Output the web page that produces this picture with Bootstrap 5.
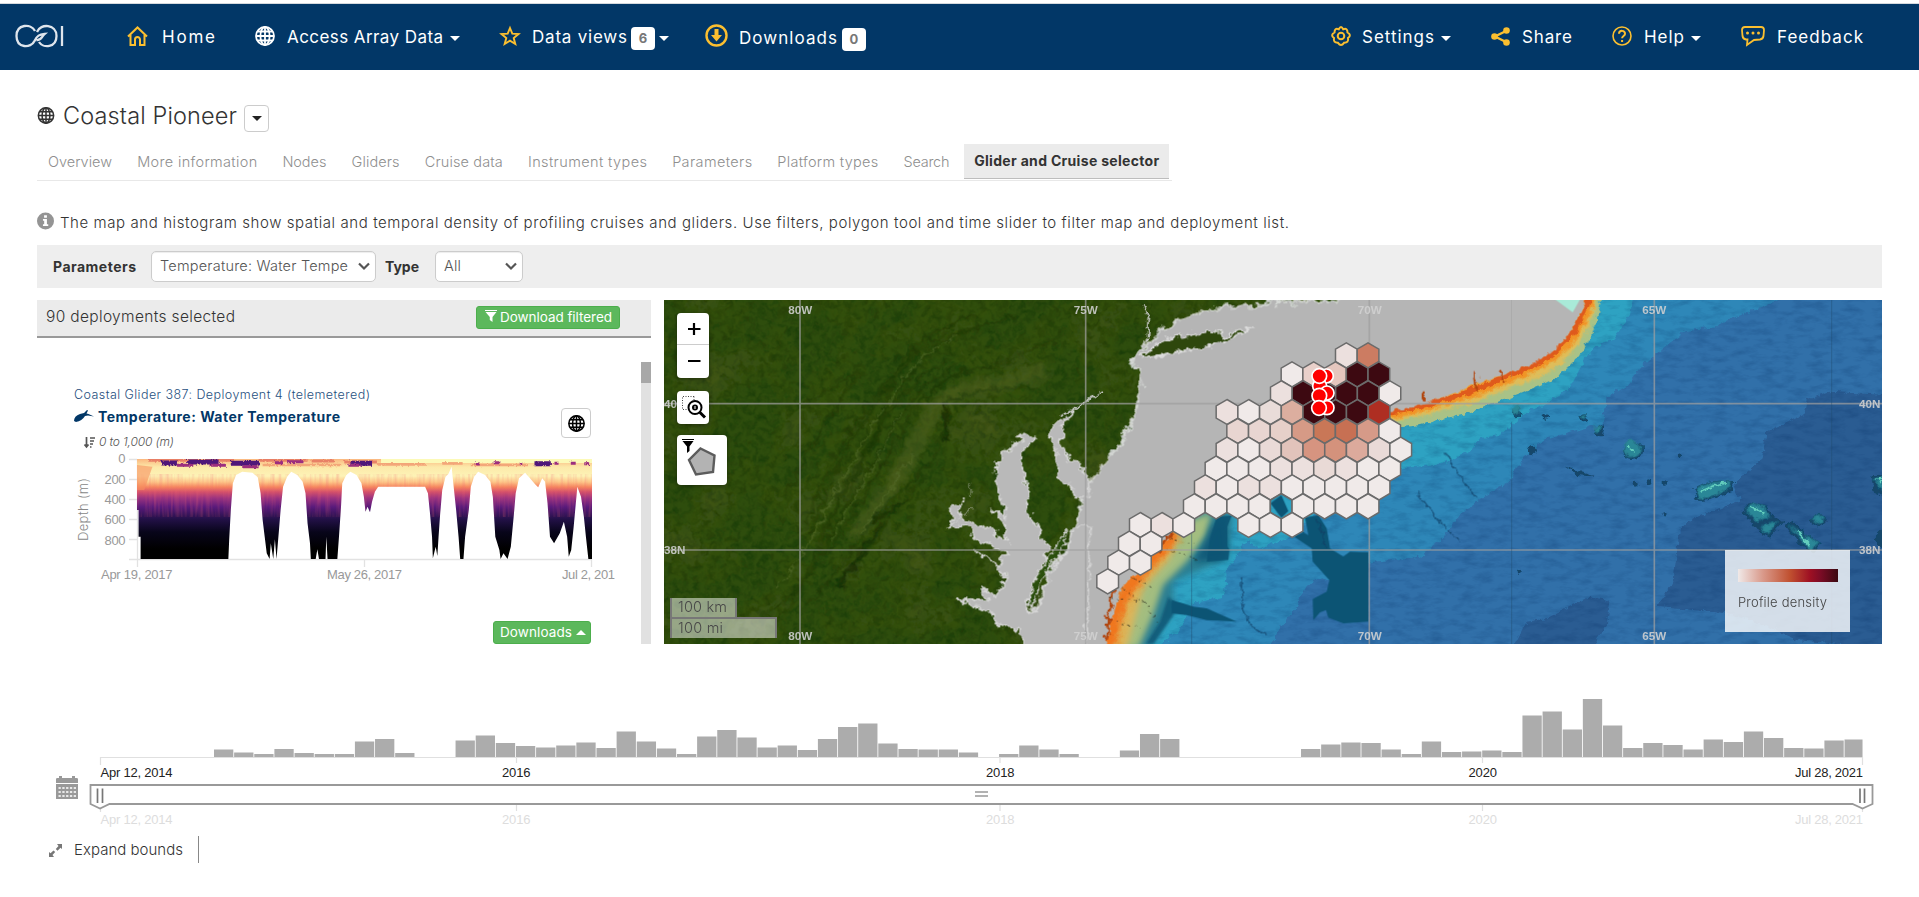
<!DOCTYPE html>
<html lang="en">
<head>
<meta charset="utf-8">
<title>Coastal Pioneer</title>
<link href="https://cdn.jsdelivr.net/npm/bootstrap@5.3.0/dist/css/bootstrap.min.css" rel="stylesheet">
<style>
body{font-family:Inter,"Open Sans",sans-serif;font-size:14.500px;color:#333;background:#fff;overflow:hidden}
.t{display:block;white-space:nowrap;flex:none}
.ico{flex:none;display:block;overflow:visible}
.topbar{margin-top:3px;height:67px;border-top:1px solid #d5d9de;background:#023767;color:#fff;font-size:17px;padding:2px 56px 0 15px}
.gold{color:#fbbf30}
.slot{width:32px;flex:none;margin-top:-4px}
.slot-home{width:35px}.slot-dl{width:34px}.slot-s{width:31px}.slot-fb{width:36px}
.menu{gap:40px}
.menu-main{margin-left:64px}
.caret{width:0;height:0;border:5px solid transparent;border-top-color:currentColor;border-bottom:0;flex:none;margin-left:7px}
.caret-up{border:5px solid transparent;border-bottom-color:#fff;border-top:0;width:0;height:0;margin-left:4px}
.cnt{background:#fff;color:#777;font-weight:700;font-size:13px;width:24px;height:23px;line-height:23px;border-radius:4px;text-align:center;margin-left:4px}
.main{padding:35px 37px 0}
.title{font-size:23.500px;font-weight:300;line-height:22px;margin-left:8px}
.btn-o{border:1px solid #ccc;border-radius:4px;background:#fff;display:flex;align-items:center;justify-content:center;flex:none}
.tabs{margin-top:12px;width:1135px;height:37px;border-bottom:1px solid #e8e8e8;color:#8f8f8f;font-weight:300;line-height:36px;padding-left:11px;gap:25.200px}
.tabs .on{background:#ebebeb;color:#333;font-size:14px;font-weight:700;height:35px;line-height:33px;border-bottom:1px solid #bdbdbd;padding:0 10px;margin-left:-10.500px}
.info{margin-top:31px;height:21px;line-height:21px;gap:6px;font-size:15px;font-weight:300}
.filters{margin-top:12px;height:43px;background:#eee;padding:0 0 1px 16px}
.filters b{font-size:14px}
.sel{height:31px;border:1px solid #ccc;border-radius:5px;background:#fff;color:#555;font-weight:300;padding:0 5px 0 8px;box-shadow:inset 0 1px 1px rgba(0,0,0,.075)}
.panels{margin-top:12px;gap:13px;height:344px}
.left{width:614px}
.lhead{height:38px;background:#ebebeb;border-bottom:2px solid #999;padding:0 31px 2px 9px}
.lhead>.t{font-weight:300;font-size:15.500px}
.grn{background:#5cb85c;border:1px solid #4cae4c;border-radius:3px;color:#fff;font-size:13.500px;height:23px;display:flex;align-items:center}
.list{height:282px;margin-top:24px}
.track{width:10px;background:#e1e1e1}
.thumb{height:21px;background:#a8a8a8}
.navy{color:#023767}
.dep{color:#1f4f7e;font-size:12.500px;font-weight:300;line-height:19px}
.depth{padding:4px 0 0 10px;color:#555;font-size:12px;font-weight:300;line-height:20px}
.map{width:1218px;height:344px}
.map>svg{display:block}
.over{position:absolute;background:#fff;border-radius:4px;box-shadow:0 1px 4px rgba(0,0,0,.4)}
.over svg{display:block}
.o1{left:13px;top:13px;width:32px;height:65px}
.o2{left:13px;top:91px;width:32px;height:33px}
.o3{left:13px;top:135px;width:50px;height:50px}
.scale{position:absolute;left:6px;top:298px;color:#484848;font-size:14.500px;font-weight:300;line-height:17px}
.scale>div{background:rgba(255,255,255,.5);border:2px solid #777;border-top:0;padding-left:6px;height:21px}
.scale .km{width:67px;border-bottom:0;height:19px}
.scale .mi{width:107px;border-top:2px solid #777;border-bottom:0}
.legend{position:absolute;left:1061px;top:250px;width:125px;height:82px;background:rgba(255,255,255,.8);padding:19px 13px;color:#444;font-size:13px;font-weight:300}
.ramp{width:100px;height:13px;background:linear-gradient(90deg,#f0e9e8,#d9998a 25%,#c05030 52%,#9e1023 72%,#7d0c26 82%,#3b0911)}
.arial{font-family:"Liberation Sans",Arial,sans-serif}
.time{margin-top:46px;display:block}
.expand{margin-top:6px;height:27px;padding-left:12px;width:162px;border-right:1px solid #888;font-size:15px;font-weight:300}
</style>
</head>
<body>
<svg width="0" height="0" class="position-absolute">
<defs>
<symbol id="globe" viewBox="0 0 20 20"><g fill="none" stroke="currentColor" stroke-width="1.800"><circle cx="10" cy="10" r="9"/><ellipse cx="10" cy="10" rx="4.600" ry="9"/><path d="M10 1v18M1 10h18M2.600 5.500h14.800M2.600 14.500h14.800"/></g></symbol>
<symbol id="funnel" viewBox="0 0 12 12"><path fill="currentColor" d="M0 0h12v1H0zM.5 2h11L7.500 7v5L4.800 10V7z"/></symbol>
</defs>
</svg>

<nav class="topbar d-flex align-items-center">
  <svg class="ico" width="48" height="22" viewBox="0 0 48 22" fill="none" stroke="#dfe5ec" stroke-width="2.300" style="margin-top:-4px"><path d="M20 6C16-2 1.500-1 1.500 11c0 12.500 14.500 12.500 18 5 2.500-5.500 5-6.500 10-7-3 2.500-3 6.500-8 6M22 7c3.500-9 19.500-8 19.500 4 0 12-13.500 12.500-17.500 6M47 1v20"/></svg>
  <div class="menu menu-main d-flex align-items-center">
    <div class="d-flex align-items-center"><div class="slot slot-home gold"><svg class="ico" width="21" height="20" viewBox="0 0 21 20" fill="none" stroke="currentColor" stroke-width="2"><path d="M1 10.500L10.500 1.500 20 10.500M3.500 9v10H8v-5.500a2.500 2.500 0 0 1 5 0V19h4.500V9"/></svg></div><span class="t" data-w="53">Home</span></div>
    <div class="d-flex align-items-center"><div class="slot"><svg class="ico" width="20" height="20"><use href="#globe"/></svg></div><span class="t" data-w="156">Access Array Data</span><i class="caret"></i></div>
    <div class="d-flex align-items-center"><div class="slot gold"><svg class="ico" width="20" height="20" viewBox="0 0 20 20" fill="none" stroke="currentColor" stroke-width="1.900"><path d="M10 2l2.300 5.700 6.200.3-4.800 4 1.600 6-5.300-3.400L4.700 18l1.600-6-4.800-4 6.200-.3z"/></svg></div><span class="t" data-w="95">Data views</span><span class="cnt">6</span><i class="caret ms-1"></i></div>
    <div class="d-flex align-items-center" style="margin-left:-4px"><div class="slot slot-dl gold"><svg class="ico" width="23" height="23" viewBox="0 0 23 23" style="margin-top:-2px"><circle cx="11.500" cy="11.500" r="10" fill="none" stroke="currentColor" stroke-width="2.400"/><path fill="currentColor" d="M9.500 5h4v6h3.500l-5.500 6.500L6 11h3.500z"/></svg></div><span class="t" style="margin-top:2px" data-w="98">Downloads</span><span class="cnt" style="margin-top:3px;margin-left:5px">0</span></div>
  </div>
  <div class="menu d-flex align-items-center ms-auto">
    <div class="d-flex align-items-center"><div class="slot slot-s gold"><svg class="ico" width="20" height="20" viewBox="0 0 20 20" fill="none" stroke="currentColor" stroke-width="2"><circle cx="10" cy="10" r="3.300"/><path d="M7.800 3.200Q10-1 12.200 3.200 16.500 1.500 16.500 6.500 21 9 17 12 18 17 13 16.800 10 21 7 16.800 2 17 3 12-1 9 3.500 6.500 3.500 1.500 7.800 3.200z"/></svg></div><span class="t" data-w="72">Settings</span><i class="caret"></i></div>
    <div class="d-flex align-items-center"><div class="slot slot-s gold"><svg class="ico" width="19" height="19" viewBox="0 0 19 19"><path d="M15 4L4 9.500 15 15" fill="none" stroke="currentColor" stroke-width="2.400"/><g fill="currentColor"><circle cx="15.500" cy="3.500" r="3.300"/><circle cx="3.500" cy="9.500" r="3.300"/><circle cx="15.500" cy="15.500" r="3.300"/></g></svg></div><span class="t" data-w="50">Share</span></div>
    <div class="d-flex align-items-center"><div class="slot gold"><svg class="ico" width="20" height="20" viewBox="0 0 20 20" fill="none" stroke="currentColor"><circle cx="10" cy="10" r="9" stroke-width="1.600"/><path d="M7 7.700c.3-4 6.300-3.600 6 .2-.2 2.200-2.900 2-2.900 4.300M10.100 14v2" stroke-width="2"/></svg></div><span class="t" data-w="40">Help</span><i class="caret"></i></div>
    <div class="d-flex align-items-center"><div class="slot slot-fb gold"><svg class="ico" width="24" height="20" viewBox="0 0 24 20"><path d="M4 1h16q3 0 3 3l-.5 6q-.5 3-3.500 3.500l-6 .5-7 5 .5-5.500H5q-3-.5-3.500-3.500L1 4q0-3 3-3z" fill="none" stroke="currentColor" stroke-width="1.800"/><g fill="currentColor"><circle cx="6.500" cy="7" r="1.500"/><circle cx="12" cy="7" r="1.500"/><circle cx="17.500" cy="7" r="1.500"/></g></svg></div><span class="t" data-w="86">Feedback</span></div>
  </div>
</nav>

<main class="main">
  <div class="d-flex align-items-start" style="height:27px">
    <svg class="ico ms-0" style="margin-top:2px" width="18" height="17"><use href="#globe"/></svg>
    <h1 class="title t mb-0" data-w="174">Coastal Pioneer</h1>
    <button class="btn-o p-0" style="width:25px;height:27px;margin-left:7px"><i class="caret m-0" style="color:#222"></i></button>
  </div>

  <div class="tabs d-flex">
    <span class="t" data-w="64">Overview</span><span class="t" data-w="120">More information</span><span class="t" data-w="44">Nodes</span><span class="t" data-w="48">Gliders</span><span class="t" data-w="78">Cruise data</span><span class="t" data-w="119">Instrument types</span><span class="t" data-w="80">Parameters</span><span class="t" data-w="101">Platform types</span><span class="t" data-w="46">Search</span>
    <div class="on"><span class="t" data-w="185">Glider and Cruise selector</span></div>
  </div>

  <div class="info d-flex">
    <svg class="ico" width="17" height="18" viewBox="0 0 18 18"><circle cx="9" cy="9" r="9" fill="#949494"/><path fill="#fff" d="M7.500 3h3v2.500h-3zM6.300 7h4.200v5.500h1.400v1.800H6.300v-1.800h1.300V8.800H6.300z"/></svg>
    <span class="t" data-w="1229">The map and histogram show spatial and temporal density of profiling cruises and gliders. Use filters, polygon tool and time slider to filter map and deployment list.</span>
  </div>

  <div class="filters d-flex align-items-center">
    <b class="t" data-w="83">Parameters</b>
    <div class="sel d-flex align-items-center justify-content-between" style="width:225px;margin-left:15px"><span class="t" data-w="188">Temperature: Water Tempe</span><svg class="ico" width="12" height="8" viewBox="0 0 12 8"><path d="M1 1.500l5 5 5-5" fill="none" stroke="#555" stroke-width="2.200"/></svg></div>
    <b class="t" style="margin-left:9px" data-w="34">Type</b>
    <div class="sel d-flex align-items-center justify-content-between" style="width:88px;margin-left:16px"><span class="t" data-w="17">All</span><svg class="ico" width="12" height="8" viewBox="0 0 12 8"><path d="M1 1.500l5 5 5-5" fill="none" stroke="#555" stroke-width="2.200"/></svg></div>
  </div>

  <div class="panels d-flex">
    <section class="left">
      <div class="lhead d-flex align-items-center justify-content-between">
        <span class="t" data-w="189">90 deployments selected</span>
        <button class="grn" style="width:144px;padding:0 0 0 8px"><svg class="ico" width="12" height="12" style="margin-top:-3px"><use href="#funnel"/></svg><span class="t" style="margin-left:3px" data-w="112">Download filtered</span></button>
      </div>
      <div class="list d-flex justify-content-between">
        <div style="padding:23px 0 0 37px">
          <div class="d-flex justify-content-between" style="width:517px;height:67px">
            <div>
              <a class="dep t text-decoration-none" data-w="296">Coastal Glider 387: Deployment 4 (telemetered)</a>
              <div class="d-flex navy" style="line-height:25px;height:24px;font-size:14px"><svg class="ico" width="20" height="12" viewBox="0 0 20 12" style="margin-top:6px"><path fill="currentColor" d="M0 11Q0 6 6 4l4-1L13 0l1 .5-1.500 3 2 .5 5.500 2.500-6-1-3 .5Q8 11 2 12z"/></svg><b class="t" style="margin-left:4px" data-w="242">Temperature: Water Temperature</b></div>
              <div class="depth d-flex fst-italic"><svg class="ico" width="11" height="11" viewBox="0 0 11 11" style="margin-top:5px"><path d="M2.500 0v10M.5 7.500l2 2.500 2-2.500M6 1h5M6 4h4M6 7h3M6 10h1.500" fill="none" stroke="#555" stroke-width="1.700"/></svg><span class="t" style="margin-left:4px" data-w="75">0 to 1,000 (m)</span></div>
            </div>
            <button class="btn-o p-0" style="width:30px;height:30px;margin-top:23px"><svg width="17" height="17"><use href="#globe"/></svg></button>
          </div>
          <svg class="d-block" style="margin-left:-4px" width="545" height="133" viewBox="70 452 545 133">
            <defs>
              <linearGradient id="mag" gradientUnits="userSpaceOnUse" x1="0" y1="327" x2="0" y2="627"><stop offset="0" stop-color="#fbb77f"/><stop offset=".08" stop-color="#fce9a9"/><stop offset=".17" stop-color="#fdf3b6"/><stop offset=".23" stop-color="#fdc889"/><stop offset=".28" stop-color="#f6875f"/><stop offset=".33" stop-color="#d3506b"/><stop offset=".39" stop-color="#9b3380"/><stop offset=".48" stop-color="#591a7b"/><stop offset=".6" stop-color="#231148"/><stop offset=".73" stop-color="#08051a"/><stop offset=".9" stop-color="#000"/></linearGradient>
              <clipPath id="sil"><path d="M262 327V480h4v80h5v67H486L488 570 492 480 497 400 505 375 520 365 545 368 558 382 565 430 570 510 575 560 580 610 587 627 590 580 596 627 600 568 604 627 610 540 614 480 620 410 630 380 640 365 655 375 668 395 675 430 680 520 686 580 688 627H700L704 598 708 627H724L726 560 729 627H753L757 560 762 470 765 400 775 375 785 365 800 375 812 400 818 440 822 485 827 470 833 487 838 455 845 425 853 410H968L975 430 980 490 985 560 987 625 994 590 998 618 1001 560 1005 490 1010 420 1018 380 1025 372 1033 350 1038 410 1044 480 1050 560 1054 627H1062L1066 560 1075 480 1080 410 1088 380 1098 365 1115 375 1128 395 1134 440 1140 560 1150 600 1153 627 1160 610 1170 627 1178 590 1185 500 1190 430 1198 385 1213 368 1225 385 1237 402 1245 412 1255 385 1262 395 1268 460 1274 560 1284 580 1298 550 1308 515 1316 560 1320 620 1326 600 1332 530 1338 450 1341 410 1350 440 1357 500 1362 560 1368 627H1377V327z"/></clipPath>
              <filter id="streak" x="0" y="0" width="100%" height="100%" color-interpolation-filters="sRGB"><feTurbulence type="fractalNoise" baseFrequency=".12 .01" numOctaves="2" seed="4"/><feColorMatrix values="0 0 0 0 .95  0 0 0 0 .4  0 0 0 0 .45  2 0 0 0 -.8"/></filter>
              <filter id="jag" x="-5%" y="-30%" width="110%" height="160%"><feTurbulence type="fractalNoise" baseFrequency=".2" numOctaves="2"/><feDisplacementMap in="SourceGraphic" scale="9"/></filter>
            </defs>
            <path d="M129 459.500H137M129 479.500H137M129 499.500H137M129 519.500H137M129 539.500H137M129 559.500H592M137.500 459V567M364.500 559V567M591.500 559V567" stroke="#e2e2e2" stroke-width="1.300" fill="none"/>
            <g transform="translate(30,350) scale(.40816,.33333)">
              <g clip-path="url(#sil)">
                <rect x="262" y="327" width="1116" height="300" fill="url(#mag)"/>
                <rect x="262" y="375" width="1116" height="125" filter="url(#streak)" opacity=".3"/>
                <path d="M262 345L300 350 280 420H262z" fill="#f6905f" opacity=".6"/>
                <rect x="860" y="327" width="518" height="12" fill="#fcfab8"/>
                <g filter="url(#jag)">
                  <path stroke="#e4705e" stroke-width="9" opacity=".8" d="M290 331H500M560 331H680M690 333H745M770 336H850" fill="none"/>
                  <path stroke="#f19a6f" stroke-width="8" opacity=".8" d="M570 345H760M850 343H970M1010 340H1060M1080 345H1220" fill="none"/>
                  <path stroke="#4f1479" stroke-width="15" d="M322 339H360M385 336H462M492 340H562M785 340H838M1236 341H1276" fill="none"/>
                  <path stroke="#9c2f7f" stroke-width="9" d="M360 346H400M440 346H480M520 350H560M600 338H620M630 335H670M780 346H810M1092 342H1102M1136 338H1150M1200 341h6M1285 340h10M1325 340h12M1358 341h12" fill="none"/>
                </g>
              </g>
            </g>
            <g class="arial" font-size="13" fill="#999">
              <g text-anchor="end"><text x="125.500" y="463">0</text><text x="125.500" y="483.500" textLength="21">200</text><text x="125.500" y="504" textLength="21">400</text><text x="125.500" y="524" textLength="21">600</text><text x="125.500" y="544.500" textLength="21">800</text></g>
              <text x="101" y="579" textLength="71.500">Apr 19, 2017</text><text x="327" y="579" textLength="75">May 26, 2017</text><text x="562" y="579" textLength="53">Jul 2, 201</text>
            </g>
            <text transform="translate(87.500 541) rotate(-90)" font-size="13" font-weight="300" fill="#888" textLength="63">Depth (m)</text>
          </svg>
          <button class="grn" style="width:98px;margin:36px 0 0 419px;padding:0 0 0 6px"><span class="t" data-w="72">Downloads</span><i class="caret-up"></i></button>
        </div>
        <div class="track"><div class="thumb"></div></div>
      </div>
    </section>

    <section class="map position-relative overflow-hidden">
      <svg width="1218" height="344" viewBox="-1188 15 3654 1032">
        <defs>
          <filter id="rough" x="-5%" y="-5%" width="110%" height="110%"><feTurbulence type="fractalNoise" baseFrequency=".035" numOctaves="4" seed="3"/><feDisplacementMap in="SourceGraphic" scale="38" xChannelSelector="R" yChannelSelector="G"/></filter>
          <filter id="fine" x="-10%" y="-10%" width="120%" height="120%"><feTurbulence type="fractalNoise" baseFrequency=".05" numOctaves="3" seed="8"/><feDisplacementMap in="SourceGraphic" scale="22" xChannelSelector="R" yChannelSelector="G"/></filter>
          <filter id="soft" x="-20%" y="-20%" width="140%" height="140%"><feGaussianBlur stdDeviation="9"/></filter>
          <filter id="faint" x="-20%" y="-20%" width="140%" height="140%"><feGaussianBlur stdDeviation="3"/></filter>
          <filter id="grain" x="0" y="0" width="100%" height="100%" color-interpolation-filters="sRGB"><feTurbulence type="fractalNoise" baseFrequency=".05" numOctaves="4" seed="5" result="n"/><feColorMatrix in="n" values="0 0 0 0 .06  0 0 0 0 .16  0 0 0 0 0  1.600 0 0 0 -.65"/><feComposite operator="in" in2="SourceGraphic"/></filter>
          <filter id="grainL" x="0" y="0" width="100%" height="100%" color-interpolation-filters="sRGB"><feTurbulence type="fractalNoise" baseFrequency=".006" numOctaves="6" seed="11" result="n"/><feColorMatrix in="n" values="0 0 0 0 .33  0 0 0 0 .37  0 0 0 0 .12  0 2 0 0 -.85"/><feComposite operator="in" in2="SourceGraphic"/></filter>
          <filter id="sea" x="0" y="0" width="100%" height="100%" color-interpolation-filters="sRGB"><feTurbulence type="fractalNoise" baseFrequency=".02 .05" numOctaves="4" seed="7"/><feColorMatrix values="0 0 0 0 0  0 0 0 0 .15  0 0 0 0 .35  0 0 1.300 0 -.55"/></filter>
          <clipPath id="south"><path d="M-300 500H1000V1060H-300z"/></clipPath>
          <path id="mainland" d="M-1220-20H860L835 17 780 18 640 22 610 30 520 34 430 42 400 58 350 80 310 98 285 128 262 140 250 165 228 180 212 205 240 220 245 260 238 300 225 345 215 375 190 430 175 455 150 482 130 505 108 540 88 562 62 600 60 650 40 700 25 750 0 790-20 805-38 850-55 900-70 935-85 940-92 1000-88 1080H-1220z"/>
        </defs>
        <rect x="-1188" y="15" width="3654" height="1032" fill="#3170a9"/>
        <g filter="url(#fine)">
          <path fill="#2e87b8" d="M2190 0L2000 78 1960 98 1880 105 1820 150 1750 210 1700 270 1640 310 1625 385 1520 415 1450 435 1380 500 1350 560 1280 600 1200 660 1140 740 1080 785 930 802 830 860 780 850 740 870 700 950 660 1000 625 1060H200V500L1600 0z"/>
          <path fill="#2da2c2" d="M1720 0L1710 60 1660 130 1600 160 1560 220 1530 280 1450 330 1400 350 1320 420 1260 430 1230 470 1130 510 1020 520 900 600 760 660 700 720 600 760 560 740 500 830 495 905 400 925 360 1000 290 1060H150V700L900 350 1560 0z"/>
          <path fill="#2a5b92" d="M2240 315L2310 290 2480 300V1060L2210 1035 2100 985 2000 955 1790 935 1840 860 1860 700 1900 670 2040 620 2025 565 2105 490 2120 410 2230 360zM1360 1060L1400 980 1460 970 1590 905 1650 920 1640 990 1590 1060z"/>
        </g>
        <!-- seabed relief -->
        <rect x="200" y="15" width="2266" height="1032" filter="url(#sea)" opacity=".35"/>
        <!-- continental slope -->
        <g clip-path="url(#south)">
          <path filter="url(#soft)" fill="#2a7e92" d="M400 650L520 655 500 790 340 860 340 950 270 1060H140L200 850z"/>
          <path filter="url(#soft)" fill="#a3bd80" d="M330 700L455 650 440 720 380 800 310 870 280 960 235 1060H120L190 850z"/>
          <path filter="url(#soft)" fill="#dcb55a" d="M240 800L370 690 330 790 250 880 200 1060H120L190 860z"/>
        </g>
        <g fill="none" filter="url(#fine)">
          <path filter="url(#soft)" stroke="#f0761c" stroke-width="44" d="M142 1070L165 960 190 900 245 825 300 765 345 712"/>
          <path stroke="#a9c287" stroke-width="100" d="M1575-10Q1555 190 1385 238L1225 300 1065 342 985 350"/>
          <path filter="url(#faint)" stroke="#dfbd5a" stroke-width="62" d="M1585-10Q1545 190 1385 232L1225 295 1065 335 985 350"/>
          <path filter="url(#faint)" stroke="#f19427" stroke-width="36" d="M1595-10Q1545 170 1385 230L1225 295 1065 338 985 355"/>
          <path stroke="#df5a1a" stroke-width="16" d="M1592-10Q1545 168 1385 225L1225 292 1065 337 985 355"/>
        </g>
        <g fill="#0c5474">
          <path filter="url(#soft)" opacity=".85" d="M490 665L450 700 430 750 400 800 495 795 505 760z"/>
          <path d="M470 665L515 662 502 695 502 755 508 762 505 795 440 800 450 730z" opacity=".9"/>
          <path filter="url(#faint)" d="M325 905L345 925 340 960 280 1047H258L300 980z" opacity=".8"/>
          <path d="M335 915L370 925 400 935 440 940 530 980 440 975 380 960 335 955z"/>
          <path d="M631 625L664 600 694 640 664 668zM735 668L775 660 800 700 810 760 850 785 870 770 925 772V980L850 985 805 968 798 945 780 952 760 975 758 912 800 890 808 855 758 800 755 760 702 725 730 712 745 720z"/>
        </g>
        <path fill="#2da2c2" d="M664 600L697 625V655L690 660z"/>
        <!-- shelf -->
        <path filter="url(#fine)" fill="#b5b5b5" d="M1585-20Q1570 45 1545 85 1510 150 1440 195L1370 225 1240 270 1150 305 1060 335 990 350 900 500 440 650 350 700 290 760 235 825 180 890 160 960 145 1010 135 1080H-400V-20z"/>
        <path fill="#a9ead8" d="M1485 13H1560L1545 40 1538 52z"/>
        <!-- land -->
        <g filter="url(#rough)"><use href="#mainland" fill="#2e4e0d" stroke="#d5d8d5" stroke-width="7"/></g>
        <path filter="url(#rough)" fill="#2f470f" stroke="#dcdcdc" stroke-width="5" d="M245 185L285 150 330 128 400 118 480 110 500 122 545 100 570 102 520 125 470 145 380 168 270 188z"/>
        <g filter="url(#rough)"><use href="#mainland" filter="url(#grainL)" opacity=".6"/><use href="#mainland" filter="url(#grain)" opacity=".6"/></g>
        <g fill="none" stroke-linecap="round" filter="url(#rough)">
          <path stroke="#5f6a2b" stroke-width="50" opacity=".4" d="M-610 710Q-500 590-420 420-350 280-260 280-140 270-60 230" filter="url(#soft)"/>
          <g stroke="#173306" stroke-width="5" opacity=".65" filter="url(#faint)">
            <path d="M-920 980Q-760 900-670 700-620 560-560 440-500 250-480 200-400 100-250 60"/>
            <path d="M-860 1000Q-720 800-660 600-600 500-540 380-440 180-280 110-200 80-130 60"/>
            <path d="M-770 700Q-700 520-620 400-540 270-440 180"/>
            <path d="M-750 720Q-680 520-600 400-520 270-420 170"/>
            <path d="M-730 750Q-600 500-520 360-440 250-330 190"/>
            <path d="M-715 770Q-590 560-495 390-440 280-310 210"/>
            <path d="M-700 780Q-580 600-470 400-430 300-290 230"/>
            <path d="M-820 600Q-700 350-600 240M-790 340L-600 230"/>
            <path d="M-760 930Q-640 800-580 700-500 600-400 520-340 440-340 320-200 270-80 280"/>
            <path d="M-680 880Q-580 780-500 650L-410 550M-420 330Q-360 240-260 220-140 200 0 120"/>
            <path d="M-640 460L-560 330M-620 560L-500 330M-400 160L-250 90M-540 300Q-460 160-330 110"/>
          </g>
          <g stroke="#5b7230" stroke-width="4" opacity=".5"><path d="M-740 720Q-600 440-500 300-430 180-300 120M-690 740Q-570 540-480 360M-850 880Q-720 720-640 520M-600 720Q-520 600-440 480"/></g>
          <path stroke="#0a1d02" stroke-width="12" opacity=".5" filter="url(#faint)" d="M-345 330L-340 440M-560 680L-480 620M-660 870Q-600 780-540 690"/>
        </g>
        <!-- bays and rivers -->
        <g filter="url(#rough)" fill="#b9b9b9" stroke="#d6d6d6" stroke-width="5">
          <path d="M42 352L5 372-20 395-28 430-8 478-12 548 20 560 50 605 90 610 85 555 60 505 20 485 2 450 5 405 18 382z"/>
          <path d="M-100 415L-68 430-100 455-118 490-105 560-95 615-100 650-70 690-35 760-45 800-70 850-90 910-95 950-72 950-40 870-10 810 25 760 50 700 90 700 80 1080H-95L-120 1005-190 990-200 960-255 935-310 905-260 915-215 920-240 870-190 910-165 850-200 800-255 765-180 810-160 770-240 740-275 700-320 690-325 640-295 620-300 660-270 680-200 710-155 740-165 690-210 640-160 670-185 590-195 500-150 460z"/>
        </g>
        <path filter="url(#fine)" fill="#2c4f0d" stroke="#d5d5d5" stroke-width="4" d="M20 700L15 750-15 790-45 835-70 890-82 940-90 925-80 860-45 810-20 770z"/>
        <g fill="none" stroke="#cfcfcf" stroke-width="5" filter="url(#fine)"><path d="M250 30L265 60 262 140M0 365L60 330 125 290"/><path d="M-270 565L-270 610M-260 640L-340 700" opacity=".4"/></g>
        <g fill="none" stroke="#123e64" stroke-width="4" opacity=".7" filter="url(#fine)"><path d="M1155 470Q1190 540 1250 610M1070 590Q1130 680 1200 740M545 850Q540 940 570 990L620 1020M770 670L800 760" /></g>
        <path filter="url(#rough)" fill="none" stroke="#b14411" stroke-width="8" d="M1245 225L1250 285M1093 295V325M1325 220L1335 260M165 870L150 960 140 1040M340 710L280 770 225 830M130 960L160 985"/>
        <path fill="none" stroke="#26251a" stroke-width="3" stroke-dasharray="6 12" opacity=".8" filter="url(#fine)" d="M190 880L260 930 300 990M220 850L280 880M170 980L240 1000M330 730L400 750M320 760L420 795M150 910L230 915"/>
        <g filter="url(#fine)">
          <g fill="#13466a"><circle cx="1372" cy="352" r="14"/><circle cx="1456" cy="366" r="8"/><circle cx="1573" cy="370" r="12"/><circle cx="1619" cy="405" r="16"/><circle cx="1418" cy="465" r="13"/><path d="M1515 515L1570 530 1605 545 1550 540z"/><circle cx="1727" cy="566" r="9"/><circle cx="1767" cy="563" r="7"/><circle cx="1816" cy="564" r="8"/><circle cx="1859" cy="482" r="7"/><circle cx="1814" cy="661" r="6"/><circle cx="1376" cy="830" r="6"/><ellipse cx="1719" cy="466" rx="30" ry="29"/><path d="M1900 580Q1960 545 2022 562L2015 590 1950 615 1910 618z"/><path d="M2045 650L2070 620 2120 635 2140 660 2170 680 2130 725 2090 705z"/><path d="M2175 690L2200 680 2240 720 2285 745 2260 775 2220 750zM2250 680L2275 650 2300 680 2275 695zM2435 540H2470V605L2440 590zM2440 730L2470 700V765z"/></g>
          <g fill="#2b8797" filter="url(#faint)"><circle cx="1369" cy="345" r="14"/><circle cx="1716" cy="461" r="26"/><circle cx="1573" cy="366" r="7"/><circle cx="1613" cy="400" r="11"/><path d="M1905 582Q1960 550 2016 562L2000 585 1950 608 1915 610z"/><path d="M2055 645L2080 624 2118 642 2130 665 2090 678zM2100 695L2155 678 2125 715z"/><path d="M2185 688L2235 722 2280 745 2250 765zM2258 676L2275 655 2292 678 2275 687zM2440 548H2470V590z"/></g>
          <path fill="none" stroke="#63cdbd" stroke-width="6" d="M1920 590L1950 578 1995 560M2075 635L2110 655M1705 455L1720 470M2210 705L2250 750M2450 550L2466 560"/>
        </g>
        <!-- graticule -->
        <g stroke="#a0a0a0" stroke-width="5" opacity=".72"><path d="M-780 15V1047M77 15V1047M928 15V1047M1783 15V1047M-1188 326H2466M-1188 765H2466"/></g>
        <path d="M395 640V1047M1355 380V1047M2315 15V1047" stroke="#20486b" stroke-width="2" opacity=".6"/>
        <path d="M1355 15V250" stroke="#888" stroke-width="1.500" opacity=".5"/>
        <g class="arial" font-weight="700" font-size="35" fill="#d2d2d2" opacity=".88">
          <g text-anchor="middle"><text x="-779" y="56">80W</text><text x="77" y="56">75W</text><text x="929" y="56">70W</text><text x="1783" y="56">65W</text><text x="-779" y="1035">80W</text><text x="77" y="1035">75W</text><text x="929" y="1035">70W</text><text x="1783" y="1035">65W</text></g>
          <text x="-1188" y="338">40N</text><text x="-1188" y="777">38N</text><text x="2397" y="338">40N</text><text x="2397" y="777">38N</text>
        </g>
        <g id="hexes" stroke="#6b6b6b" stroke-width="4.500"></g>
        <g fill="#f00" stroke="#fff" stroke-width="5"><circle cx="799" cy="243" r="21"/><circle cx="779" cy="273" r="21"/><circle cx="801" cy="294" r="21"/><circle cx="801" cy="338" r="21"/><circle cx="778" cy="243" r="22"/><circle cx="778" cy="302" r="22"/><circle cx="777" cy="339" r="22"/></g>
      </svg>
      <div class="over o1"><svg width="32" height="65"><path d="M11 16H23.500M17 10V22M11 48H23.500" stroke="#000" stroke-width="2.200"/><path d="M0 31.500H32" stroke="#ccc"/></svg></div>
      <div class="over o2"><svg width="32" height="33" fill="none"><path d="M17 5.500H5.500V18.500H11M17 5.500V9" stroke="#444" stroke-dasharray="1 1.500"/><circle cx="18" cy="16.500" r="6.500" stroke="#000" stroke-width="2"/><path d="M22.500 21L28 26.500" stroke="#000" stroke-width="3"/><circle cx="18" cy="16.500" r="3" fill="#000"/><path d="M18 15v3" stroke="#fff"/></svg></div>
      <div class="over o3"><svg width="50" height="50"><path d="M5 4H17V5H5zM5.500 6H16.500L12.500 11.500V16L10 18V11.500z" fill="#000"/><path d="M23.500 13.500L37.500 20.500 36 37 19 39.500 12 25z" fill="#b3b3b3" stroke="#5c5c5c" stroke-width="2.400"/></svg></div>
      <div class="scale"><div class="km"><span class="t" data-w="49">100 km</span></div><div class="mi"><span class="t" data-w="45">100 mi</span></div></div>
      <div class="legend"><div class="ramp"></div><span class="t" style="margin-top:11px" data-w="89">Profile density</span></div>
    </section>
  </div>

  <svg class="time" width="1845" height="140" viewBox="37 690 1845 140">
    <g id="bars" fill="#acacac"></g>
    <path d="M100.500 765V757.500H1862.500V765M516.500 757V763M1000 757V763M1482.500 757V763M516.500 805V811M1000 805V811M1482.500 805V811M100.500 808V812M1862.500 808V812" fill="none" stroke="#e0e0e0" stroke-width="1.200"/>
    <g class="arial" font-size="13" fill="#222"><text x="100.500" y="776.500" textLength="72">Apr 12, 2014</text><text x="502" y="776.500" textLength="28.500">2016</text><text x="986" y="776.500" textLength="28.500">2018</text><text x="1468.500" y="776.500" textLength="28.500">2020</text><text x="1795" y="776.500" textLength="68">Jul 28, 2021</text></g>
    <g class="arial" font-size="13" fill="#ddd"><text x="100.500" y="823.500" textLength="72">Apr 12, 2014</text><text x="502" y="823.500" textLength="28.500">2016</text><text x="986" y="823.500" textLength="28.500">2018</text><text x="1468.500" y="823.500" textLength="28.500">2020</text><text x="1795" y="823.500" textLength="68">Jul 28, 2021</text></g>
    <path d="M90.500 785H1872.500V804L1862.500 808.500 1852.500 804H109.500L100 808.500 90.500 804z" fill="#fff" stroke="#999" stroke-width="1.800"/>
    <path d="M97.500 788.500V803M102.500 788.500V803M1860 788.500V803M1864.500 788.500V803" stroke="#777" stroke-width="1.700"/>
    <path d="M975 792H988M975 796H988" stroke="#999" stroke-width="1.700"/>
    <g fill="#999"><path d="M56 783V779q0-1 1.500-1H59V776h3v2H72V776h3v2h1.500q1.500 0 1.500 1v4zM56 784H78V799H56z"/></g>
    <path d="M58.500 788H76M58.500 792H76M58.500 796H76" stroke="#e8e8e8" stroke-width="2" stroke-dasharray="2.300 1.500"/>
  </svg>

  <div class="expand d-flex align-items-center">
    <svg class="ico" width="13" height="13" viewBox="0 0 13 13" fill="#777" style="margin-top:2px"><path d="M13 0v5L11.500 3.800 8.500 6.800 6.800 5 9.500 2 8 0zM0 13V8l1.500 1.200L4.500 6.500 6.200 8 3.500 11 5 13z"/></svg>
    <span class="t" style="margin:2px 0 0 12px" data-w="109">Expand bounds</span>
  </div>
</main>

<script src="https://cdn.jsdelivr.net/npm/bootstrap@5.3.0/dist/js/bootstrap.bundle.min.js"></script>
<script>
// track each label out to its design width
document.querySelectorAll('[data-w]').forEach(function (e) {
  var r = document.createRange(); r.selectNodeContents(e);
  var w = +e.dataset.w, n = e.textContent.length;
  e.style.letterSpacing = ((w - r.getBoundingClientRect().width) / (n - 1 || 1)).toFixed(3) + 'px';
  e.style.width = w + 'px';
});
var NS = 'http://www.w3.org/2000/svg';
// deployments per month
var h = [7.5,4.5,3,8,4,3,3,15.5,18,4,0,0,16.5,21.5,14,11,9.5,11.5,14.5,9,25.5,15.5,8.5,3,20.5,27,19.5,9.5,11.5,7,18,30,33.5,13.5,8,7.5,7.5,4.5,0,3,11.5,7.5,3,0,0,6.5,23,18,0,0,0,0,0,0,8,12.5,14.5,14,7.5,3,15.5,5,5.5,6.5,5,41.5,45.5,27.5,58,31.5,9,14,12,7.5,17.5,15,25.5,19,9,8.5,16.5,17.5];
h.forEach(function (v, k) {
  if (!v) return;
  var b = document.createElementNS(NS, 'rect');
  b.setAttribute('x', 214 + 20.13 * k); b.setAttribute('y', 757 - v);
  b.setAttribute('width', k === 81 ? 18 : 19.3); b.setAttribute('height', v);
  document.getElementById('bars').appendChild(b);
});
// profile density cells: [centre y, first x, colours]
var L = '#f0eae9', M = '#ece0de', P = '#e8d5d1', K = '#3d0911';
var rows = [
  [181, 859, [M, '#cc7c62']],
  [238, 696, [L, '#e9d0ca', '#e5c6be', K, K]],
  [295, 664, [M, K, K, K, K, L]],
  [351, 501, [M, L, '#e9dcd9', '#dcae9f', K, K, K, '#ae2e22']],
  [408, 533, [P, P, '#e6d0c9', '#d69a86', '#c97757', '#c77053', '#d69a88', L]],
  [464, 501, [M, L, '#e9dad7', '#e2c3bb', '#d69480', '#d4927c', '#dcaa9c', '#e9dad7', L]],
  [521, 468, [L, L, L, M, M, '#e9dad6', M, L, L]],
  [577, 436, [M, L, M, M, L, L, L, L, L]],
  [634, 403, [L, L, L, L, 'none', L, L, L, L]],
  [690, 241, [L, M, L]], [690, 566, [L, L, L]],
  [746, 208, [L, L]], [803, 176, [L, L]], [859, 143, [L]]
];
rows.forEach(function (r) {
  r[2].forEach(function (c, i) {
    var x = r[1] + 65.15 * i, y = r[0], p = document.createElementNS(NS, 'path');
    p.setAttribute('d', 'M' + x + ' ' + (y - 37.5) + 'l32.500 19v37l-32.500 19l-32.500-19v-37z');
    p.setAttribute('fill', c);
    document.getElementById('hexes').appendChild(p);
  });
});
</script>
</body>
</html>
